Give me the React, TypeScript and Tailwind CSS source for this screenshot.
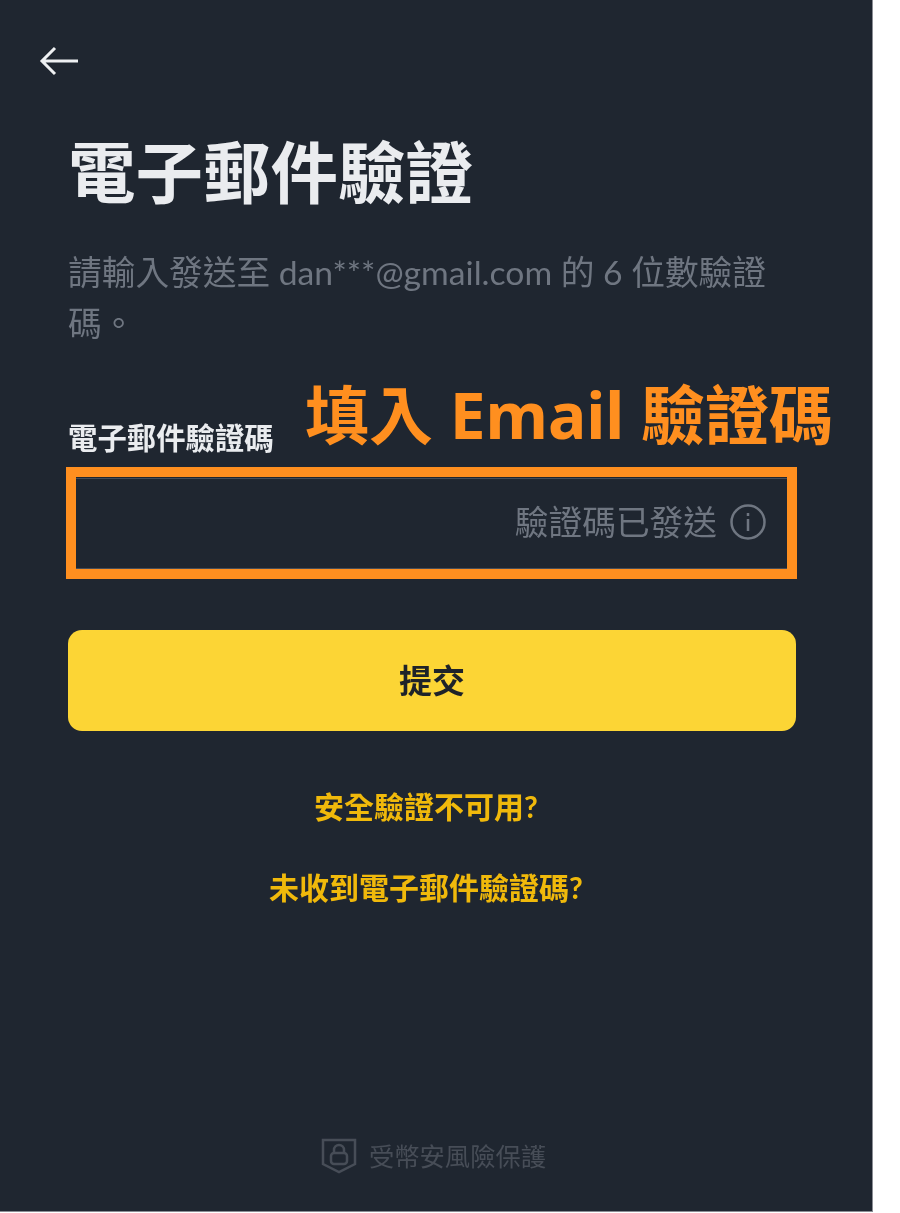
const cjk = { fontFamily: '"Lato", "Noto Sans CJK TC", sans-serif' };

export default function App() {
  return (
    <div className="w-[900px] h-[1213px] bg-white overflow-hidden" style={cjk}>
      <div className="relative flex flex-col w-[873px] h-[1212px] bg-[#1f2630] border-r border-b border-[#8a8d94]">
        <div className="flex flex-col flex-1 blur-[0.6px]">
          <div className="h-[122px] pt-[42px] pl-[38px]">
            <svg width="42" height="38" viewBox="0 0 42 38" fill="none" stroke="#eef0f2" strokeWidth="3">
              <path d="M17 6 L4 19 L17 32 M4 19 H40" />
            </svg>
          </div>
          <div className="flex flex-col pl-[68px] pr-[76px]">
            <h1 className="text-[67.5px] leading-[100px] font-bold text-[#eaecef]">電子郵件驗證</h1>
            <p className="mt-[25px] w-[710px] text-[33.7px] leading-[51px] text-[#6f7681]">
              請輸入發送至 dan***@gmail.com 的 6 位數驗證碼。
            </p>
            <label className="mt-[67px] text-[29.4px] leading-[44px] font-bold text-[#eaecef]">電子郵件驗證碼</label>
            <div className="mt-[18px] flex h-[91px] items-center justify-end gap-[12px] border border-[#474d57] rounded-[6px] pr-[28px] pb-[4px]">
              <span className="text-[33.7px] text-[#6f7681] leading-[44px]">驗證碼已發送</span>
              <svg width="38" height="38" viewBox="0 0 38 38" fill="none" stroke="#6f7681" strokeWidth="2.5">
                <circle cx="19" cy="19" r="16.5" />
                <path d="M19 16 V28 M19 10 V13" />
              </svg>
            </div>
            <button className="mt-[61px] h-[101px] rounded-[14px] bg-[#fcd535] text-[33px] font-bold text-[#1e2329]">提交</button>
            <a className="mt-[54px] pr-[12px] text-center text-[30px] leading-[42px] font-bold text-[#f0b90b]">安全驗證不可用?</a>
            <a className="mt-[39px] pr-[12px] text-center text-[30px] leading-[42px] font-bold text-[#f0b90b]">未收到電子郵件驗證碼?</a>
          </div>
          <div className="mt-auto mb-[36px] flex items-center justify-center gap-[12px] pr-[5px]">
            <svg width="36" height="38" viewBox="0 0 36 38" fill="none" stroke="#474d57" strokeWidth="2.5">
              <path d="M2 3 H34 V27 L18 35 L2 27 Z" />
              <rect x="10" y="16" width="16" height="11" rx="3" />
              <path d="M13 16 V13 A5 5 0 0 1 23 13 V16" />
            </svg>
            <span className="text-[25.3px] leading-[38px] text-[#474d57]">受幣安風險保護</span>
          </div>
        </div>
        <div className="absolute left-[66px] top-[377px] text-[64px] leading-[76px] font-bold text-[#ff8f1f] whitespace-nowrap pl-[239px]" style={{ fontFamily: '"Noto Sans", "Noto Sans CJK TC", sans-serif' }}>
          填入 Email 驗證碼
        </div>
        <div className="absolute left-[66px] top-[467px] w-[731px] h-[112px] border-[10px] border-[#ff8f1f]" />
      </div>
    </div>
  );
}
